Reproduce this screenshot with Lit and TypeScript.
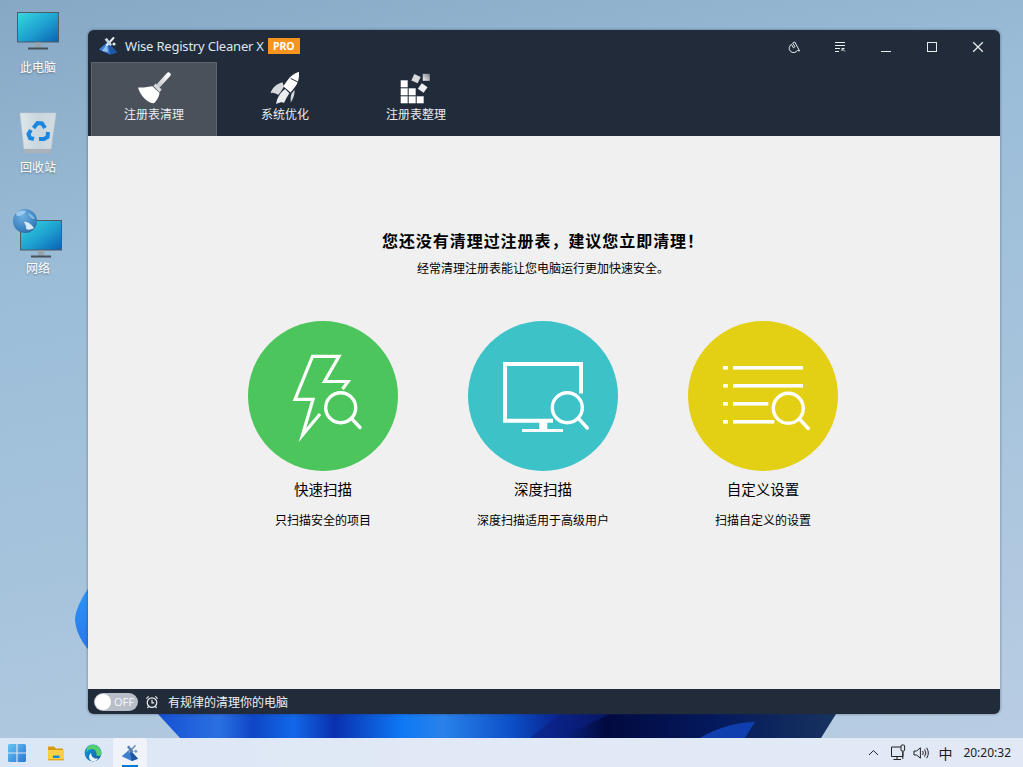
import {LitElement, css, html, svg} from 'lit';
import {customElement} from 'lit/decorators.js';

const lens = (cx: number, cy: number, x1: number, y1: number, x2: number, y2: number) => svg`
  <circle cx=${cx} cy=${cy} r="15" fill="none" stroke="#fff" stroke-width="3.4"></circle>
  <line x1=${x1} y1=${y1} x2=${x2} y2=${y2} stroke="#fff" stroke-width="3.4" stroke-linecap="round"></line>`;

const boltIcon = html`
  <svg class="scan-art" viewBox="0 0 150 150">
    <path d="M94.5 68 L100 60.5 L76.5 60.5 L91 35.3 L64.5 35.3 L47 78.3 L65 78.3 L54.5 114 L72 93"
      fill="none" stroke="#fff" stroke-width="3.2" stroke-miterlimit="10"></path>
    ${lens(92.7, 86.7, 103.5, 97.5, 112, 106.5)}
  </svg>`;

const screenIcon = html`
  <svg class="scan-art" viewBox="0 0 150 150">
    <path d="M113 72.5 V43 H37 V99.7 H85" fill="none" stroke="#fff" stroke-width="4"></path>
    <rect x="71.3" y="101" width="8" height="7" fill="#fff"></rect>
    <rect x="54" y="108" width="41" height="3" fill="#fff"></rect>
    ${lens(99.3, 86.7, 110.5, 97.5, 119.3, 107)}
  </svg>`;

const listIcon = html`
  <svg class="scan-art" viewBox="0 0 150 150">
    ${[45, 63, 81, 99].map((y, i) => svg`
      <rect x="35" y=${y} width="5" height="3.6" fill="#fff"></rect>
      <rect x="45" y=${y} width=${[70, 70, 35.3, 41.3][i]} height="3.6" fill="#fff"></rect>`)}
    ${lens(100.3, 87.3, 111.5, 98, 120.3, 107.5)}
  </svg>`;

const SCANS = [
  {name: '快速扫描', desc: '只扫描安全的项目', color: '#4cc55c', icon: boltIcon},
  {name: '深度扫描', desc: '深度扫描适用于高级用户', color: '#3dc2c8', icon: screenIcon},
  {name: '自定义设置', desc: '扫描自定义的设置', color: '#e3cf14', icon: listIcon},
];

const broomIcon = html`
  <svg class="tab-art" viewBox="2 0 44 39">
    <defs>
      <linearGradient id="handle" x1="0" y1="1" x2="1" y2="0">
        <stop offset="0" stop-color="#c9ccd0"></stop><stop offset="1" stop-color="#fff"></stop>
      </linearGradient>
    </defs>
    <line x1="38.6" y1="6.6" x2="29" y2="17" stroke="url(#handle)" stroke-width="4.4" stroke-linecap="round"></line>
    <path d="M25.6 15.6 L31.6 21.6 L29.6 24.2 L23.4 18 Z" fill="#d8dadd"></path>
    <path d="M8 19.4 C13 20 19 18.6 22.4 18.2 L29.6 25 C29 29 26.5 33 24 35.2 C17.5 35 10.5 28 8 19.4 Z" fill="#fff"></path>
  </svg>`;

const rocketIcon = html`
  <svg class="tab-art" viewBox="-7 0 44 39">
    <path d="M29 3.8 C29.6 10 28 15.4 24.6 19.6 L20.6 24.4 L13.2 18.2 L17 13 C20 8.6 24 5.2 29 3.8 Z" fill="#fff"></path>
    <path d="M20.6 10.4 L27.8 14" stroke="#212b3a" stroke-width="1" fill="none"></path>
    <path d="M12.4 14.2 L14 18.6 L11 23.6 L8.2 27 C6 25 1.8 24 0.6 25.2 C1.6 20.4 6.6 15.6 12.4 14.2 Z" fill="#d6d8db"></path>
    <path d="M15 21 L19.4 25.2 L16.6 29.8 L14 35 C12.6 34 11 33.6 6.2 36 C6.6 30.4 10.4 24.4 15 21 Z" fill="#eceef0"></path>
    <path d="M21.6 25.4 L24.6 21.8 C24.8 25.4 24 30 20.8 34.6 C20.6 31 20.4 28 21.6 25.4 Z" fill="#d0d3d7"></path>
  </svg>`;

const blocksIcon = html`
  <svg class="tab-art" viewBox="-6 0 44 39">
    <defs>
      <linearGradient id="fade" x1="0" y1="1" x2="1" y2="0">
        <stop offset="0" stop-color="#f4f4f4"></stop><stop offset="1" stop-color="#777d86"></stop>
      </linearGradient>
    </defs>
    ${[[0.7, 12.3], [0.7, 20.3], [8.7, 20.3], [0.7, 28.3], [8.7, 28.3], [16.7, 28.3]].map(
      ([x, y]) => svg`<rect x=${x} y=${y} width="7" height="7" fill="#fff"></rect>`)}
    <rect x="12.5" y="7.2" width="7" height="7" fill="#d8dadd" transform="rotate(25 16 10.7)"></rect>
    <rect x="19.2" y="16.5" width="7" height="7" fill="#eef0f2" transform="rotate(35 22.7 20)"></rect>
    <rect x="22.8" y="5.8" width="7" height="7" fill="url(#fade)"></rect>
  </svg>`;

const TABS = [
  {label: '注册表清理', icon: broomIcon, active: true},
  {label: '系统优化', icon: rocketIcon, active: false},
  {label: '注册表整理', icon: blocksIcon, active: false},
];

const appLogo = html`
  <svg class="logo-art" viewBox="0 0 20 20">
    <path d="M9.5 6 L19 16.5 L12 18.5 L0.8 13.6 Z" fill="#3a80d2"></path>
    <path d="M9.5 6 L12 18.5 L19 16.5 Z" fill="#1f5aa8"></path>
    <path d="M4 15 L9 8 L10 16 Z" fill="#8ec0ee"></path>
    <line x1="9" y1="9" x2="15.5" y2="2" stroke="#eef2f6" stroke-width="1.9" stroke-linecap="round"></line>
    <path d="M6.6 3.4 L8.8 1.8 L14 8.4 L12 10 Z" fill="#c9d6e4"></path>
    <circle cx="16" cy="8" r="1.6" fill="#dfe7ef"></circle>
  </svg>`;

const pcIcon = html`
  <svg class="pc-art" viewBox="0 0 42 38">
    <defs>
      <linearGradient id="pc" x1="0" y1="0" x2="1" y2="1">
        <stop offset="0" stop-color="#36d9e2"></stop>
        <stop offset="0.55" stop-color="#1d9ecf"></stop>
        <stop offset="1" stop-color="#0a62b4"></stop>
      </linearGradient>
    </defs>
    <rect x="0.5" y="0.5" width="41" height="29.5" fill="url(#pc)" stroke="#4e5a68"></rect>
    <rect x="18" y="30.5" width="6" height="5" fill="#98a2a8"></rect>
    <rect x="11" y="35.5" width="20" height="2" fill="#47505a"></rect>
  </svg>`;

const binIcon = html`
  <svg class="bin-art" viewBox="0 0 38 44">
    <defs>
      <linearGradient id="bin" x1="0" y1="0" x2="1" y2="0">
        <stop offset="0" stop-color="#dfe6ea"></stop>
        <stop offset="0.5" stop-color="#c8d6de"></stop>
        <stop offset="1" stop-color="#d3dbe0"></stop>
      </linearGradient>
    </defs>
    <path d="M1 2 L37 2 L32 38 L5 38 Z" fill="url(#bin)" stroke="#c2ccd3" stroke-width="0.6"></path>
    <path d="M5 38 H32 V41 Q32 42 30 42 H7 Q5 42 5 41 Z" fill="#a9b2b8"></path>
    <g fill="none" stroke="#1a86e0" stroke-width="4">
      <path d="M14.5 17 L18.5 12 L23 12.5 L26 17"></path>
      <path d="M29 21 L28.5 26 L25 28 L20 28"></path>
      <path d="M15 28 L11 27 L9.5 23 L12 19"></path>
    </g>
  </svg>`;

const globeIcon = html`
  <svg class="globe-art" viewBox="0 0 24 24">
    <defs>
      <radialGradient id="globe" cx="0.4" cy="0.3" r="0.8">
        <stop offset="0" stop-color="#6fb0e2"></stop>
        <stop offset="0.7" stop-color="#3a82bf"></stop>
        <stop offset="1" stop-color="#2f5c8c"></stop>
      </radialGradient>
    </defs>
    <circle cx="12" cy="12" r="12" fill="url(#globe)"></circle>
    <path d="M3 4 C6 1.5 10 1 13 2 C12 5 8 7 4 7 Z" fill="#9ccbeb"></path>
    <path d="M11 13 C14 12 18 15 21 19 C18 21 15 21 13 20 C14 18 12 15 11 13 Z" fill="#d6eaf7"></path>
    <path d="M15 4 C18 5 21 7 22 10 C19 10 16 8 15 4 Z" fill="#82b8e0"></path>
  </svg>`;

const winIcon = html`
  <svg class="task-art" viewBox="0 0 18 18">
    <defs>
      <linearGradient id="win" x1="0" y1="0" x2="1" y2="1">
        <stop offset="0" stop-color="#66c4f2"></stop><stop offset="1" stop-color="#2a78d8"></stop>
      </linearGradient>
    </defs>
    <path d="M0 1.5 Q0 0 1.5 0 H8.4 V8.4 H0 Z M9.6 0 H16.5 Q18 0 18 1.5 V8.4 H9.6 Z M0 9.6 H8.4 V18 H1.5 Q0 18 0 16.5 Z M9.6 9.6 H18 V16.5 Q18 18 16.5 18 H9.6 Z" fill="url(#win)"></path>
  </svg>`;

const folderIcon = html`
  <svg class="task-art" viewBox="0 0 18 18">
    <path d="M1 2.5 H7 L9 4.5 H16 V7 H1 Z" fill="#d99a12"></path>
    <path d="M1 6 H17 V16 H1 Z" fill="#fbcf4a"></path>
    <rect x="6" y="11.5" width="6.5" height="2.5" fill="#1c88d6"></rect>
    <rect x="1" y="15" width="16" height="1.4" fill="#e8a920"></rect>
  </svg>`;

const edgeIcon = html`
  <svg class="task-art" viewBox="0 0 18 18">
    <defs>
      <linearGradient id="edge" x1="0" y1="0" x2="1" y2="1">
        <stop offset="0" stop-color="#1aa0d8"></stop><stop offset="1" stop-color="#0b55a8"></stop>
      </linearGradient>
    </defs>
    <circle cx="9" cy="9" r="8.4" fill="url(#edge)"></circle>
    <path d="M5 2 C10 -1 17 2 17.4 9.5 C17.4 12 14 12.6 12.4 11.6 C13 8 11 5 8 5 C5.5 5 3.5 6.5 2.6 8.5 C2.4 6 3 3.5 5 2 Z" fill="#53cf72"></path>
    <path d="M7 9 C7 12.4 10 15.4 14.4 14.4 C12.6 16.8 10 17.6 8.5 17.3 C4.5 16.4 4 11.5 7 9 Z" fill="#e8f4fb"></path>
  </svg>`;

const taskLogo = html`<svg class="task-art" viewBox="0 0 20 20">
    <path d="M9.5 6 L19 16.5 L12 19 L0.8 13.6 Z" fill="#3f7fcf"></path>
    <path d="M9.5 6 L12 19 L19 16.5 Z" fill="#1f56a0"></path>
    <line x1="9" y1="9" x2="15.5" y2="2" stroke="#7d9cc4" stroke-width="2" stroke-linecap="round"></line>
    <path d="M6.6 3.4 L8.8 1.8 L14 8.4 L12 10 Z" fill="#5c7eaa"></path>
    <circle cx="16.4" cy="8" r="1.7" fill="#7d9cc4"></circle>
  </svg>`;

@customElement('app-root')
export class AppRoot extends LitElement {
  static styles = css`
    :host {
      display: flex;
      flex-direction: column;
      width: 100vw;
      height: 100vh;
      overflow: hidden;
      font-family: "Noto Sans", "Noto Sans CJK SC", sans-serif;
    }

    /* desktop */
    .desktop {
      position: relative;
      flex: 1;
      background: linear-gradient(168deg, #86a8c4 0%, #9bbdd8 30%, #a6c3dc 60%, #b8cde2 100%);
    }
    .wallpaper { position: absolute; inset: 0; width: 100%; height: 100%; }
    .shortcut {
      position: absolute;
      left: 0;
      width: 76px;
      display: flex;
      flex-direction: column;
      align-items: center;
      color: #fff;
      font-size: 12px;
      line-height: 18px;
      text-shadow: 0 1px 2px rgba(0, 0, 0, .35);
    }
    .pc { top: 12px; gap: 9px; }
    .bin { top: 111px; gap: 4px; }
    .net { top: 220px; gap: 2px; }
    .pc-art { width: 42px; height: 38px; display: block; }
    .bin-art { width: 38px; height: 44px; display: block; }
    .net-art { position: relative; width: 42px; margin-left: 6px; }
    .globe-art { position: absolute; left: -7px; top: -11px; width: 24px; height: 24px; }

    /* window */
    .window {
      position: absolute;
      left: 88px;
      top: 30px;
      width: 912px;
      height: 684px;
      display: flex;
      flex-direction: column;
      border-radius: 6px;
      overflow: hidden;
      background: #212b3a;
      box-shadow: 0 0 3px rgba(40, 50, 70, .55);
    }
    .titlebar { display: flex; align-items: center; height: 32px; padding-left: 10px; flex: none; }
    .logo-art { width: 20px; height: 20px; margin-right: 7px; }
    .title { color: #dfe5ec; font-size: 13px; letter-spacing: -.2px; white-space: nowrap; }
    .pro {
      margin-left: 4px;
      width: 32px;
      height: 16px;
      background: #f7941d;
      color: #fff;
      font-size: 10.5px;
      font-weight: 700;
      line-height: 16px;
      text-align: center;
    }
    .controls { display: flex; margin-left: auto; margin-right: -1px; }
    .ctl { width: 46px; height: 32px; display: flex; align-items: center; justify-content: center; margin-top: 1px; }
    .ctl svg { width: 12px; height: 12px; fill: none; stroke: #e9ecef; stroke-width: 1; display: block; }
    .tabs { display: flex; gap: 5px; height: 74px; padding-left: 3px; flex: none; }
    .tab {
      box-sizing: border-box;
      width: 126px;
      display: flex;
      flex-direction: column;
      align-items: center;
      color: #e8ecf0;
      font-size: 12px;
      line-height: 16px;
      padding-top: 5px;
      border: 1px solid transparent;
      border-bottom: 0;
    }
    .tab.active { background: #4a515b; border-color: #5e656f; }
    .tab-art { width: 44px; height: 39px; display: block; }

    .main {
      flex: 1;
      background: #f0f0f0;
      color: #000;
      display: flex;
      flex-direction: column;
      align-items: center;
      padding: 93px 2px 0 0;
    }
    h1 { margin: 0; font-size: 16px; font-weight: 700; line-height: 24px; letter-spacing: .95px; }
    .lead { margin: 7px 0 0; font-size: 12px; line-height: 18px; }
    .scans { display: flex; margin-top: 43px; }
    .scan { width: 220px; display: flex; flex-direction: column; align-items: center; }
    .disc { width: 150px; height: 150px; border-radius: 50%; }
    .scan-art { width: 150px; height: 150px; display: block; }
    .scan-name { margin-top: 8px; font-size: 14.5px; line-height: 20px; }
    .scan-desc { margin-top: 13px; font-size: 12px; line-height: 18px; }

    .statusbar { height: 25px; flex: none; display: flex; align-items: center; padding-left: 6px; color: #eef1f4; font-size: 12px; }
    .toggle {
      box-sizing: border-box;
      width: 44px;
      height: 18px;
      border-radius: 9px;
      background: #b9bfc9;
      display: flex;
      align-items: center;
      justify-content: space-between;
      padding: 0 4px 0 1px;
      color: #f2f4f6;
      font-size: 11px;
    }
    .knob { width: 16px; height: 16px; border-radius: 50%; background: #fff; }
    .clock { width: 14px; height: 14px; margin: 0 9px 0 7px; fill: none; stroke: #eef1f4; stroke-width: 1.2; }

    /* taskbar */
    .taskbar {
      height: 29px;
      flex: none;
      display: flex;
      align-items: center;
      background: linear-gradient(90deg, #dbe6f4, #e2e9f6 50%, #e0e9f5);
      color: #1c1c1c;
    }
    .task { width: 37px; height: 29px; display: flex; align-items: center; justify-content: center; position: relative; }
    .task-art { width: 18px; height: 18px; display: block; }
    .task.start { width: 33px; margin-right: 4px; }
    .task.open { width: 34px; margin-left: 2px; background: #f0f4fa; border-radius: 3px 3px 0 0; }
    .task.open::after {
      content: '';
      position: absolute;
      left: 9px;
      right: 9px;
      bottom: 0;
      height: 2px;
      background: #0078d4;
    }
    .tray { margin-left: auto; display: flex; align-items: center; padding-right: 12px; }
    .tray svg { display: block; fill: none; stroke: #222; stroke-width: 1; }
    .chev { width: 11px; height: 7px; margin-right: 11px; }
    .netico { width: 17px; height: 17px; margin-right: 6px; }
    .vol { width: 17px; height: 14px; margin-right: 8px; }
    .ime { font-size: 14px; margin-right: 11px; font-family: "Noto Sans CJK SC", sans-serif; }
    .time { font-size: 12px; }
  `;

  render() {
    return html`
      <div class="desktop">
        <svg class="wallpaper" viewBox="0 0 1023 738">
          <defs>
            <linearGradient id="fold" x1="0" y1="0" x2="1" y2="0">
              <stop offset="0" stop-color="#1650d2"></stop>
              <stop offset=".09" stop-color="#2b70e2"></stop>
              <stop offset=".14" stop-color="#0e46c6"></stop>
              <stop offset=".2" stop-color="#1168e8"></stop>
              <stop offset=".26" stop-color="#0a30ae"></stop>
              <stop offset=".36" stop-color="#0e78f4"></stop>
              <stop offset=".42" stop-color="#2a82ea"></stop>
              <stop offset=".52" stop-color="#0c50c8"></stop>
              <stop offset=".58" stop-color="#0a2a96"></stop>
              <stop offset=".66" stop-color="#020a40"></stop>
              <stop offset=".82" stop-color="#04195c"></stop>
              <stop offset="1" stop-color="#17335f"></stop>
            </linearGradient>
            <linearGradient id="blob" x1="0" y1="0" x2="0" y2="1">
              <stop offset="0" stop-color="#2a9cf8"></stop>
              <stop offset="1" stop-color="#2b72e8"></stop>
            </linearGradient>
          </defs>
          <path d="M158 714 L836 714 L821 738 L180 738 Z" fill="url(#fold)"></path>
          <path d="M560 714 L610 714 L560 738 L530 738 Z" fill="#0c1f80" opacity=".6"></path>
          <path d="M700 738 C720 726 740 722 755 722 L745 738 Z" fill="#0f3fae"></path>
          <path d="M100 575 C84 590 75 610 75 620 C76 635 86 650 100 660 Z" fill="url(#blob)"></path>
        </svg>

        <div class="shortcut pc">${pcIcon}<span>此电脑</span></div>
        <div class="shortcut bin">${binIcon}<span>回收站</span></div>
        <div class="shortcut net">
          <div class="net-art">${pcIcon}${globeIcon}</div>
          <span>网络</span>
        </div>

        <section class="window">
          <div class="titlebar">
            ${appLogo}
            <span class="title">Wise Registry Cleaner X</span>
            <span class="pro">PRO</span>
            <div class="controls">
              <div class="ctl">
                <svg viewBox="0 0 12 12"><path d="M3.4 3.4 A4.4 4.4 0 1 0 9.4 9.4 L11.6 10 L6.8 1 L4.6 2.2 L7 5.6 L5.4 6.8 Z"></path></svg>
              </div>
              <div class="ctl">
                <svg viewBox="0 0 12 12"><path d="M1 1.5 H11 M1 4.5 H11 M1 7.5 H6 M1 10.5 H5 M8 7.5 L11 10.5 M8 7.5 V10 M8 7.5 H10.5"></path></svg>
              </div>
              <div class="ctl"><svg viewBox="0 0 12 12"><path d="M1 10.5 H11"></path></svg></div>
              <div class="ctl"><svg viewBox="0 0 12 12"><rect x="1.5" y="1.5" width="9" height="9"></rect></svg></div>
              <div class="ctl"><svg viewBox="0 0 12 12"><path d="M1.2 1.2 L10.8 10.8 M10.8 1.2 L1.2 10.8" stroke-width="1.3"></path></svg></div>
            </div>
          </div>

          <nav class="tabs">
            ${TABS.map(t => html`
              <div class="tab ${t.active ? 'active' : ''}">${t.icon}<span>${t.label}</span></div>`)}
          </nav>

          <main class="main">
            <h1>您还没有清理过注册表，建议您立即清理！</h1>
            <p class="lead">经常清理注册表能让您电脑运行更加快速安全。</p>
            <div class="scans">
              ${SCANS.map(s => html`
                <div class="scan">
                  <div class="disc" style="background:${s.color}">${s.icon}</div>
                  <div class="scan-name">${s.name}</div>
                  <div class="scan-desc">${s.desc}</div>
                </div>`)}
            </div>
          </main>

          <footer class="statusbar">
            <div class="toggle"><span class="knob"></span><span>OFF</span></div>
            <svg class="clock" viewBox="0 0 14 14">
              <circle cx="7" cy="7.6" r="4.8"></circle>
              <path d="M7 4.8 V7.8 H9.2 M1.4 3.6 L3.6 1.4 M12.6 3.6 L10.4 1.4 M3.6 11.4 L2.4 13 M10.4 11.4 L11.6 13"></path>
            </svg>
            <span>有规律的清理你的电脑</span>
          </footer>
        </section>
      </div>

      <div class="taskbar">
        <div class="task start">${winIcon}</div>
        <div class="task">${folderIcon}</div>
        <div class="task">${edgeIcon}</div>
        <div class="task open">${taskLogo}</div>
        <div class="tray">
          <svg class="chev" viewBox="0 0 11 7"><path d="M1 6 L5.5 1.5 L10 6"></path></svg>
          <svg class="netico" viewBox="0 0 17 17">
            <path d="M11 3 H1.5 V12.5 H13 V8 M7 12.5 V15 M3.5 15.5 H11"></path>
            <rect x="11" y="1" width="3.6" height="6" rx="1"></rect>
            <path d="M12.8 7 V15"></path>
          </svg>
          <svg class="vol" viewBox="0 0 17 14">
            <path d="M1 5 H3.6 L7.4 1.8 V12.2 L3.6 9 H1 Z M9.6 5 Q11 7 9.6 9 M11.6 3.4 Q14 7 11.6 10.6 M13.6 1.8 Q17 7 13.6 12.2"></path>
          </svg>
          <span class="ime">中</span>
          <span class="time">20:20:32</span>
        </div>
      </div>
    `;
  }
}
